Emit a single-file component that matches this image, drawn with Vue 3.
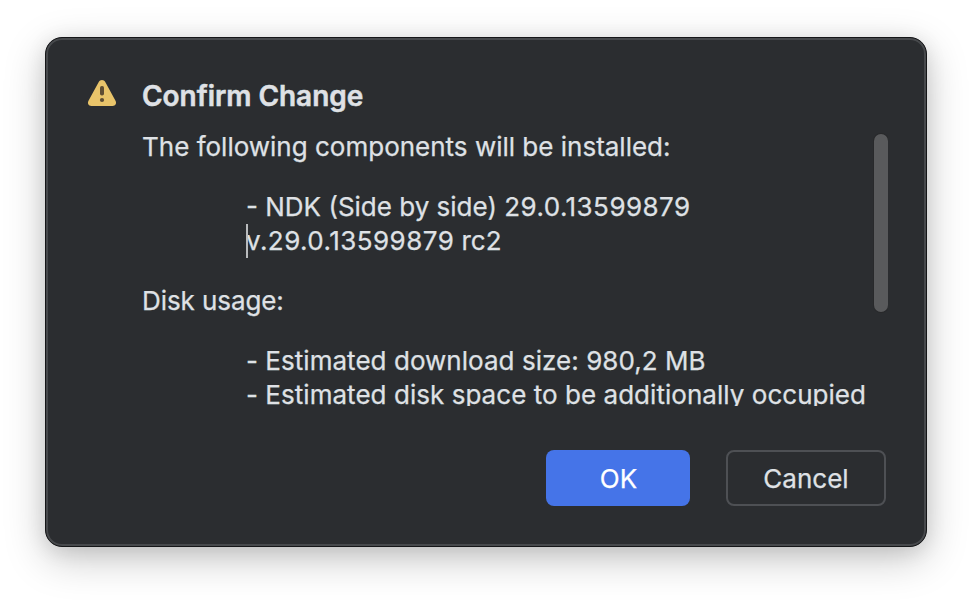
<script setup>
const components = {
  name: '- NDK (Side by side) ',
  version: '29.0.13599879',
  revision: 'v.29.0.13599879',
  stage: ' rc2',
}
</script>

<template>
  <main class="desktop">
    <section class="dialog" role="dialog">
      <div class="message">
        <svg class="warning" width="32" height="32" viewBox="0 0 32 32">
          <path d="M12.6 4.2C14 1.4 18 1.4 19.4 4.2L29.5 22.8C30.9 25.4 29.5 28 26.6 28H5.4C2.5 28 1.1 25.4 2.5 22.8Z" fill="#e9c46a" />
          <rect x="14" y="8" width="4" height="9.5" rx="1.8" fill="#5e4d33" />
          <circle cx="16" cy="22" r="2.1" fill="#5e4d33" />
        </svg>
        <div class="body">
          <h1 class="title">Confirm Change</h1>
          <div class="scroll">
            <div class="content">
              <p>The following components will be installed:</p>
              <ul>
                <li>{{ components.name }}<span class="number">{{ components.version }}</span></li>
                <li class="caret-line"><span class="number">{{ components.revision }}</span>{{ components.stage }}</li>
              </ul>
              <p class="usage">Disk usage:</p>
              <ul class="estimates">
                <li>- Estimated download size: 980,2 MB</li>
                <li>- Estimated disk space to be additionally occupied</li>
              </ul>
            </div>
            <div class="thumb"></div>
          </div>
        </div>
      </div>
      <footer class="actions">
        <button class="primary">OK</button>
        <button class="secondary">Cancel</button>
      </footer>
    </section>
  </main>
</template>

<style>
body {
  background: #fff;
}
</style>

<style scoped>
.desktop {
  box-sizing: border-box;
  width: 972px;
  height: 600px;
  padding: 37px 45px 53px;
  overflow: hidden;
  font: 400 26px/34px Inter, sans-serif;
  font-optical-sizing: none;
  -webkit-text-stroke: 0.25px currentColor;
  color: #dfe1e5;
}
.dialog {
  box-sizing: border-box;
  width: 882px;
  height: 510px;
  padding: 41px 38px 40px 40px;
  border: 1px solid #151618;
  border-radius: 17px;
  background: #2b2d30;
  box-shadow: inset 0 0 0 2px #47494c, 0 12px 42px rgba(0, 0, 0, 0.22), 0 4px 20px rgba(0, 0, 0, 0.1);
}
.message {
  display: flex;
  gap: 24px;
}
.warning {
  flex: none;
  margin-top: -1px;
}
.body {
  flex: 1;
  min-width: 0;
}
.title {
  margin: 0 0 17px;
  font-size: 28px;
  line-height: 34px;
  font-weight: 600;
  letter-spacing: -0.05px;
  -webkit-text-stroke-width: 0.5px;
}
.scroll {
  display: flex;
  justify-content: space-between;
  height: 276px;
  overflow: hidden;
}
.content {
  white-space: nowrap;
}
p {
  margin: 0 0 26px;
}
.usage {
  letter-spacing: -0.08px;
}
.number {
  letter-spacing: 0.45px;
}
ul {
  margin: 0 0 26px;
  padding: 0 0 0 104px;
  list-style: none;
}
.estimates {
  letter-spacing: 0.04px;
}
.caret-line {
  position: relative;
}
.caret-line::before {
  content: '';
  position: absolute;
  left: 0;
  top: 0;
  width: 2px;
  height: 34px;
  background: #b9bbbd;
}
.thumb {
  flex: none;
  width: 14px;
  height: 178px;
  margin-top: 4px;
  border-radius: 7px;
  background: #595a5c;
  box-shadow: 0 0 0 1px #28292b;
}
.actions {
  display: flex;
  justify-content: flex-end;
  gap: 36px;
  margin: 44px 2px 0 0;
}
button {
  box-sizing: border-box;
  height: 56px;
  border: 0;
  border-radius: 8px;
  font: inherit;
  color: inherit;
}
.primary {
  width: 144px;
  padding: 2px 0 0 1px;
  background: #4574e8;
  color: #fff;
}
.secondary {
  width: 160px;
  padding: 2px 0 0;
  border: 2px solid #4e5054;
  background: transparent;
}
</style>
